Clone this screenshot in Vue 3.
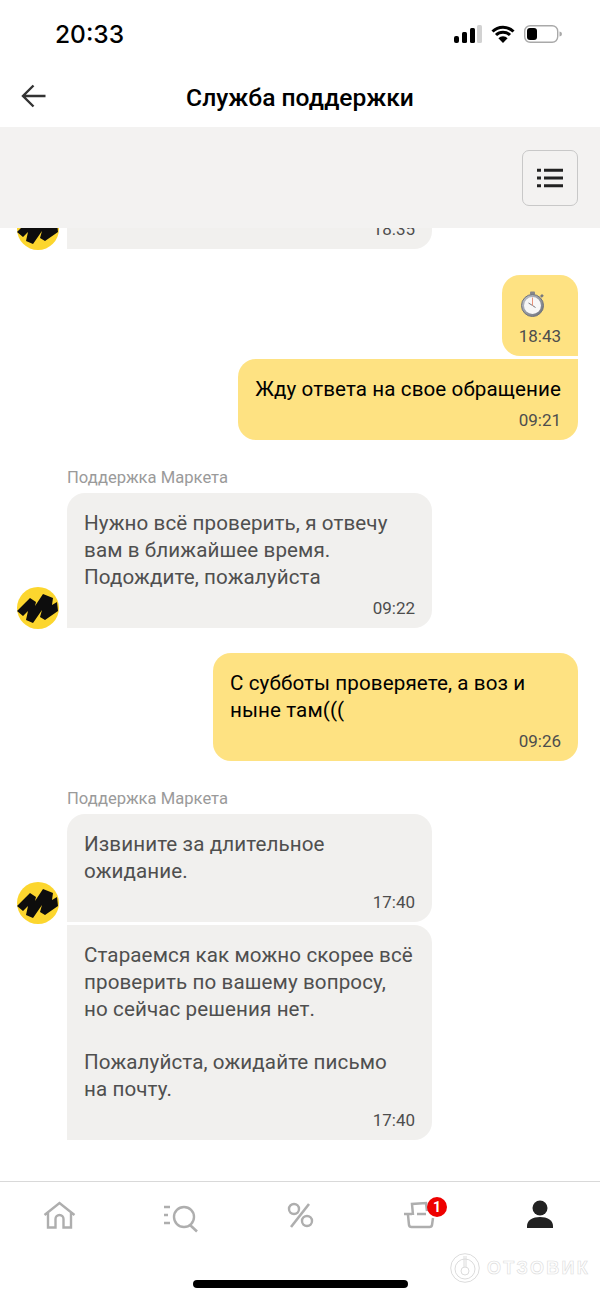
<script setup>
const logoPath = 'M0 24L13 11l6 4-1 4 8-12 10 4-1 7 5-3 1 9-13 9-5-3 2-7-9 13-7-3 2-9-5 5z'
</script>

<template>
  <div class="screen">
    <div class="status">
      <span class="clock">20:33</span>
      <div class="status-icons">
        <svg width="28" height="18" viewBox="0 0 28 18">
          <rect x="0" y="11" width="5" height="7" rx="2" fill="#000" />
          <rect x="8" y="7" width="5" height="11" rx="1.500" fill="#000" />
          <rect x="16" y="3" width="5" height="15" rx="1.500" fill="#000" />
          <rect x="23" y="0" width="5" height="18" rx="1.500" fill="#d2d2d2" />
        </svg>
        <svg width="24" height="18" viewBox="0 0 24 18">
          <path d="M1.500 6.500A15 15 0 0 1 22.500 6.500M5 10a10 10 0 0 1 14 0" fill="none" stroke="#000" stroke-width="3" />
          <path d="M12 18l-4.600-4.800a6.500 6.500 0 0 1 9.200 0z" fill="#000" />
        </svg>
        <svg width="38" height="18" viewBox="0 0 38 18">
          <rect x="0.700" y="0.700" width="33" height="16.600" rx="5.500" fill="#fff" stroke="#a9a9a9" stroke-width="1.400" />
          <rect x="3" y="3" width="10" height="12" rx="3" fill="#000" />
          <path d="M35.500 6.500a2.500 2.500 0 0 1 0 5z" fill="#a9a9a9" />
        </svg>
      </div>
    </div>

    <div class="nav">
      <svg class="back" width="28" height="24" viewBox="0 0 28 24">
        <path d="M25.500 12H3M13.500 1.500L3 12l10.500 10.500" fill="none" stroke="#333" stroke-width="2.400" />
      </svg>
      <h1 class="title">Служба поддержки</h1>
    </div>

    <div class="band">
      <button class="menu-btn" type="button" aria-label="Меню">
        <svg width="26" height="20" viewBox="0 0 26 20">
          <path d="M0 2.200h4M7 2.200h19M0 10h4M7 10h19M0 17.800h4M7 17.800h19" fill="none" stroke="#222" stroke-width="3" />
        </svg>
      </button>
    </div>

    <main class="chat">
      <div class="clip">
        <div class="row">
          <svg class="logo" viewBox="0 0 42 42"><circle cx="21" cy="21" r="21" fill="#fcd62e" /><path :d="logoPath" fill="#0d0d0d" /></svg>
          <div class="bubble gray clipped"><span class="time">18:35</span></div>
        </div>
      </div>

      <div class="group first">
        <div class="bubble yellow tail-br">
          <svg class="watch" viewBox="0 0 26 26">
            <defs>
              <linearGradient id="bezel" x1="0" y1="0" x2="1" y2="1">
                <stop offset="0" stop-color="#c4c8d0" />
                <stop offset="1" stop-color="#6a6e78" />
              </linearGradient>
            </defs>
            <rect x="10" y="0.500" width="5" height="3.500" rx="1" fill="#85858b" />
            <path d="M20 5l2-2 1.800 1.800-2 2z" fill="#77777d" />
            <circle cx="12.500" cy="14.500" r="11" fill="url(#bezel)" stroke="#70747c" stroke-width="1" />
            <circle cx="12.500" cy="14.500" r="8.500" fill="#f7f7f7" />
            <path d="M12.500 14.500l-4-2.500M12.500 14.500l3 2" stroke="#77777d" stroke-width="1" />
            <path d="M12.500 6.500v8" stroke="#e8927a" stroke-width="1" />
          </svg>
          <span class="time">18:43</span>
        </div>
        <div class="bubble yellow tail-tr">
          <p class="text">Жду ответа на свое обращение</p>
          <span class="time">09:21</span>
        </div>
      </div>

      <div class="sender">Поддержка Маркета</div>
      <div class="row">
        <svg class="logo" viewBox="0 0 42 42"><circle cx="21" cy="21" r="21" fill="#fcd62e" /><path :d="logoPath" fill="#0d0d0d" /></svg>
        <div class="bubble gray">
          <p class="text">Нужно всё проверить, я отвечу<br />вам в ближайшее время.<br />Подождите, пожалуйста</p>
          <span class="time">09:22</span>
        </div>
      </div>

      <div class="group">
        <div class="bubble yellow wide">
          <p class="text">С субботы проверяете, а воз и<br />ныне там(((</p>
          <span class="time">09:26</span>
        </div>
      </div>

      <div class="sender">Поддержка Маркета</div>
      <div class="row">
        <svg class="logo low" viewBox="0 0 42 42"><circle cx="21" cy="21" r="21" fill="#fcd62e" /><path :d="logoPath" fill="#0d0d0d" /></svg>
        <div class="bubble gray">
          <p class="text">Извините за длительное<br />ожидание.</p>
          <span class="time">17:40</span>
        </div>
      </div>
      <div class="row next">
        <div class="logo-space"></div>
        <div class="bubble gray square-left">
          <p class="text">Стараемся как можно скорее всё<br />проверить по вашему вопросу,<br />но сейчас решения нет.<br /><br />Пожалуйста, ожидайте письмо<br />на почту.</p>
          <span class="time">17:40</span>
        </div>
      </div>
    </main>

    <nav class="tabbar">
      <svg width="36" height="36" viewBox="0 0 36 36">
        <path d="M2.500 15L17.500 3l15 12M6 12v15.500h7.500V19a4 4 0 0 1 8 0v8.500H29V12" fill="none" stroke="#aeaeae" stroke-width="2.400" />
      </svg>
      <svg width="36" height="36" viewBox="0 0 36 36">
        <path d="M2 7h6M2 15h4M2 23h6" stroke="#aeaeae" stroke-width="2.400" fill="none" />
        <circle cx="22" cy="17" r="10" fill="none" stroke="#aeaeae" stroke-width="2.400" />
        <path d="M28 25l7 6.500" stroke="#aeaeae" stroke-width="2.600" fill="none" />
      </svg>
      <svg width="36" height="36" viewBox="0 0 36 36">
        <circle cx="12" cy="9" r="5" fill="none" stroke="#aeaeae" stroke-width="2.400" />
        <circle cx="25" cy="21" r="5" fill="none" stroke="#aeaeae" stroke-width="2.400" />
        <path d="M27 4L9 27" stroke="#aeaeae" stroke-width="2.600" fill="none" />
      </svg>
      <div class="cart">
        <svg width="36" height="36" viewBox="0 0 36 36">
          <path d="M2 14h8M6 15l1 10q.3 2 2.500 2h18q2.200 0 2.500-2l1-7M11 15L10 4l14-1 1 8M15 14h9" fill="none" stroke="#aeaeae" stroke-width="2.500" />
        </svg>
        <span class="badge">1</span>
      </div>
      <svg width="36" height="36" viewBox="0 0 36 36">
        <circle cx="18" cy="8" r="7.500" fill="#222" />
        <path d="M5 28v-2c0-6 6-9 13-9s13 3 13 9v2z" fill="#222" />
      </svg>
    </nav>

    <div class="bottom">
      <div class="home-bar"></div>
      <div class="mark">
        <svg width="30" height="30" viewBox="0 0 30 30">
          <g fill="none" stroke="#dcdcdc" stroke-width="1">
            <circle cx="15" cy="15" r="14.300" />
            <circle cx="15" cy="16" r="10" />
            <circle cx="15" cy="18" r="4" />
            <path d="M14 3v11M16 3v11" />
          </g>
        </svg>
        <span class="mark-text">ОТЗОВИК</span>
      </div>
    </div>
  </div>
</template>

<style>
html, body { margin: 0; background: #fff; }
</style>

<style scoped>
.screen {
  width: 600px;
  height: 1298px;
  overflow: hidden;
  display: flex;
  flex-direction: column;
  background: #fff;
  font-family: Roboto, "Liberation Sans", sans-serif;
  color: #222;
}
.status {
  height: 67px;
  display: flex;
  justify-content: space-between;
  align-items: center;
  padding: 1px 38px 0 55px;
  box-sizing: border-box;
}
.clock {
  font-family: Inter, Roboto, sans-serif;
  font-size: 24.500px;
  font-weight: 500;
  color: #000;
}
.status-icons {
  display: flex;
  align-items: center;
  gap: 9px;
}
.nav {
  height: 60px;
  position: relative;
  display: flex;
  align-items: center;
  justify-content: center;
}
.back {
  position: absolute;
  left: 20px;
  top: 17px;
}
.title {
  margin: 0;
  font-size: 24.600px;
  font-weight: 500;
  color: #000;
}
.band {
  height: 101px;
  background: #f3f2f1;
  display: flex;
  justify-content: flex-end;
  padding: 23px 22px 0 0;
  box-sizing: border-box;
}
.menu-btn {
  width: 56px;
  height: 56px;
  border: 1.500px solid #c8c8c8;
  border-radius: 7px;
  background: #f3f2f1;
  display: flex;
  align-items: center;
  justify-content: center;
  padding: 0;
}
.chat {
  flex: 1;
  min-height: 0;
  display: flex;
  flex-direction: column;
}
.clip {
  height: 23px;
  box-sizing: border-box;
  padding-bottom: 2px;
  overflow: hidden;
  display: flex;
  flex-direction: column;
  justify-content: flex-end;
  flex-shrink: 0;
}
.row {
  display: flex;
  align-items: flex-end;
  gap: 8px;
  padding-left: 17px;
}
.next {
  margin-top: 3px;
}
.logo {
  width: 42px;
  height: 42px;
  flex-shrink: 0;
  margin-bottom: -1px;
}
.logo.low {
  margin-bottom: -2px;
}
.logo-space {
  width: 42px;
  flex-shrink: 0;
}
.bubble {
  box-sizing: border-box;
  border-radius: 18px;
  padding: 17px 17px 10px;
  display: flex;
  flex-direction: column;
}
.gray {
  width: 365px;
  background: #f1f0ee;
  border-bottom-left-radius: 0;
  color: #4f4f4f;
}
.clipped {
  height: 60px;
  flex-shrink: 0;
  justify-content: flex-end;
}
.square-left {
  border-top-left-radius: 0;
}
.yellow {
  background: #fee282;
  color: #000;
  align-self: flex-end;
}
.tail-br {
  border-bottom-right-radius: 0;
}
.tail-tr {
  border-top-right-radius: 0;
}
.text {
  margin: 0;
  font-size: 20.600px;
  line-height: 26.800px;
  letter-spacing: 0.100px;
}
.time {
  align-self: flex-end;
  margin-top: 7.400px;
  font-size: 17px;
  line-height: 20px;
  color: #4d4d4d;
}
.group {
  display: flex;
  flex-direction: column;
  gap: 3px;
  margin-top: 25px;
  padding-right: 22px;
}
.first {
  margin-top: 24px;
}
.watch {
  width: 26px;
  height: 26px;
  display: block;
  margin: -1px 0 1.800px 1px;
}
.wide {
  width: 365px;
}
.sender {
  margin: 28px 0 5px 67px;
  font-size: 16.600px;
  line-height: 20px;
  color: #9a9a9a;
}
.tabbar {
  height: 65px;
  box-sizing: border-box;
  border-top: 1.500px solid #d9d9d9;
  display: grid;
  grid-template-columns: repeat(5, 120px);
  justify-items: center;
  align-items: start;
  padding-top: 17.500px;
}
.tabbar svg {
  display: block;
}
.cart {
  position: relative;
  width: 36px;
  height: 36px;
}
.badge {
  position: absolute;
  left: 25px;
  top: -3px;
  width: 20px;
  height: 20px;
  border-radius: 50%;
  background: #ee0000;
  color: #fff;
  font-size: 14px;
  font-weight: 700;
  line-height: 20px;
  text-align: center;
}
.bottom {
  height: 52px;
  position: relative;
}
.home-bar {
  position: absolute;
  left: 193px;
  top: 34px;
  width: 215px;
  height: 8px;
  border-radius: 4px;
  background: #000;
}
.mark {
  position: absolute;
  left: 450px;
  top: 7px;
  display: flex;
  align-items: center;
  gap: 7px;
}
.mark-text {
  font-family: "Liberation Sans", sans-serif;
  font-size: 18px;
  font-weight: 700;
  letter-spacing: 2.300px;
  color: #fff;
  -webkit-text-stroke: 0.600px #dcdcdc;
}
</style>
